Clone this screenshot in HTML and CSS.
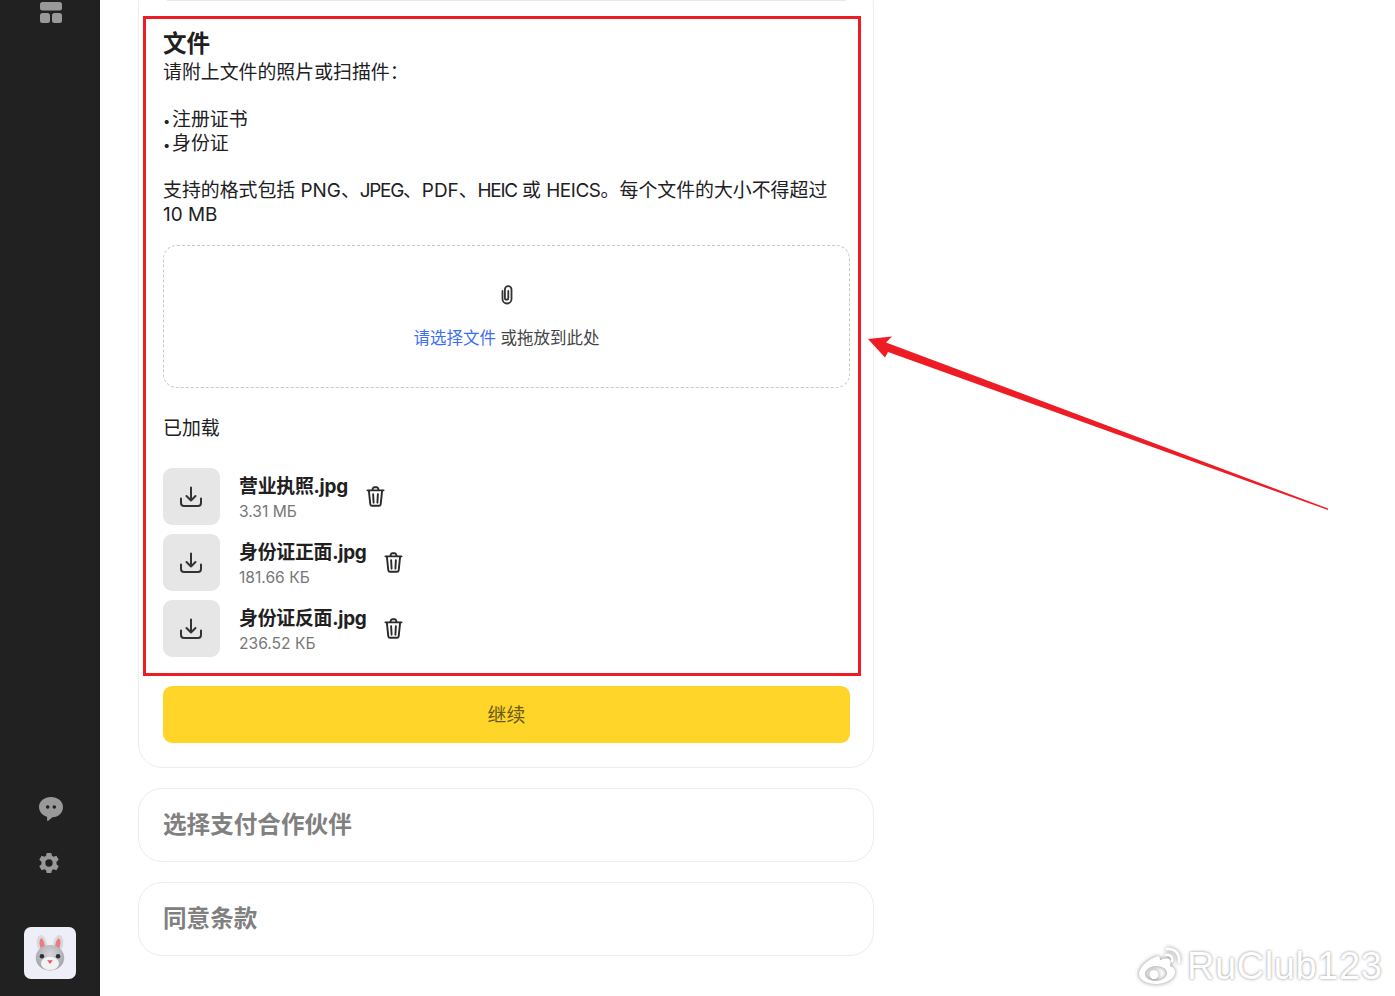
FILE: index.html
```html
<!DOCTYPE html>
<html lang="zh-CN">
<head>
<meta charset="utf-8">
<title>文件</title>
<link rel="stylesheet" href="styles.css">
</head>
<body>
<div class="app">
  <aside class="sidebar">
    <svg class="side-top" viewBox="0 0 24 24" width="24" height="24"><rect x="1" y="2" width="22" height="8.5" rx="2.500"/><rect x="1" y="13" width="10" height="10" rx="2.500"/><rect x="13" y="13" width="10" height="10" rx="2.500"/></svg>
    <div class="side-bottom">
      <svg class="side-chat" viewBox="0 0 24 24" width="24" height="24"><path d="M12 0C5.400 0 0 4.300 0 9.900c0 4.800 3.600 8.400 7.400 9.600.5.200.7.500.7 1v2.700c0 .6.6.9 1.100.5l4.300-3.500C19.500 20.200 24 15.600 24 9.900 24 4.300 18.600 0 12 0z"/><circle cx="8.700" cy="10" r="1.800" class="hole"/><circle cx="15.300" cy="10" r="1.800" class="hole"/></svg>
      <svg class="side-gear" viewBox="0 0 24 24" width="22" height="22"><path fill-rule="evenodd" d="M9.500 1h5l.7 3.200 1.800 1 3.100-1 2.500 4.300-2.400 2.200v2.600l2.400 2.200-2.500 4.300-3.100-1-1.800 1-.7 3.200h-5l-.7-3.200-1.800-1-3.100 1L1.400 15.500l2.400-2.200v-2.600L1.400 8.500l2.500-4.300 3.100 1 1.800-1zM12 8a4 4 0 1 0 0 8 4 4 0 0 0 0-8z"/></svg>
      <div class="avatar">
        <svg viewBox="0 0 40 40" width="38" height="38">
          <defs>
            <radialGradient id="fur" cx="50%" cy="35%" r="70%"><stop offset="0" stop-color="#d6d6da"/><stop offset="1" stop-color="#9c9ca4"/></radialGradient>
          </defs>
          <ellipse cx="11.500" cy="11" rx="5.300" ry="10" fill="#d9d9dd" transform="rotate(-10 11.500 11)"/>
          <ellipse cx="28.500" cy="11" rx="5.300" ry="10" fill="#d9d9dd" transform="rotate(10 28.500 11)"/>
          <ellipse cx="11.800" cy="11.500" rx="2.600" ry="7" fill="#ee7a82" transform="rotate(-10 11.800 11.500)"/>
          <ellipse cx="28.200" cy="11.500" rx="2.600" ry="7" fill="#ee7a82" transform="rotate(10 28.200 11.500)"/>
          <ellipse cx="20" cy="25" rx="15" ry="13.500" fill="url(#fur)"/>
          <ellipse cx="20" cy="31" rx="9.500" ry="7" fill="#f2f2f4"/>
          <circle cx="11.500" cy="23.500" r="2.400" fill="#2f2f33"/>
          <circle cx="28.500" cy="23.500" r="2.400" fill="#2f2f33"/>
          <path d="M17 27.500h6L20 31.500z" fill="#f0566a"/>
        </svg>
      </div>
    </div>
  </aside>
  <main class="main">
    <section class="card card-open">
      <div class="rule"></div>
      <h2 class="title">文件</h2>
      <p class="desc">请附上文件的照片或扫描件：<br><br><span class="dot">•</span>注册证书<br><span class="dot">•</span>身份证<br><br>支持的格式包括 PNG、<span class="tight">JPEG</span>、PDF、<span class="tight">HEIC</span> 或 <span class="tight-s">HEICS</span>。每个文件的大小不得超过<br>10 MB</p>
      <div class="drop">
        <svg class="clip" viewBox="0 0 14 20" width="14" height="20"><path d="M2.500 6v8a4.500 4.500 0 0 0 9 0V4.500a3.300 3.300 0 0 0-6.600 0V13a1.700 1.700 0 0 0 3.400 0V6"/></svg>
        <p class="drop-text"><span class="link">请选择文件</span> 或拖放到此处</p>
      </div>
      <p class="loaded">已加载</p>
      <ul class="files">
        <li class="file">
          <span class="tile"><svg viewBox="0 0 24 24" width="24" height="24"><path d="M12 2.500v13M7.500 11l4.500 4.500 4.500-4.500M2 13.500v4.500a3 3 0 0 0 3 3h14a3 3 0 0 0 3-3v-4.500"/></svg></span>
          <span class="meta"><b class="name">营业执照.jpg</b><span class="size">3.31 МБ</span></span>
          <svg class="trash" viewBox="0 0 20 22" width="19" height="21"><path d="M6.500 4.500l.8-2.200a1.500 1.500 0 0 1 1.400-1h2.600a1.500 1.500 0 0 1 1.400 1l.8 2.200M1.500 4.500h17M3 4.500l1.500 14.500a2 2 0 0 0 2 1.800h7a2 2 0 0 0 2-1.800L17 4.500M7.500 8.500l.5 9M12.500 8.500l-.5 9"/></svg>
        </li>
        <li class="file">
          <span class="tile"><svg viewBox="0 0 24 24" width="24" height="24"><path d="M12 2.500v13M7.500 11l4.500 4.500 4.500-4.500M2 13.500v4.500a3 3 0 0 0 3 3h14a3 3 0 0 0 3-3v-4.500"/></svg></span>
          <span class="meta"><b class="name">身份证正面.jpg</b><span class="size">181.66 КБ</span></span>
          <svg class="trash" viewBox="0 0 20 22" width="19" height="21"><path d="M6.500 4.500l.8-2.200a1.500 1.500 0 0 1 1.400-1h2.600a1.500 1.500 0 0 1 1.400 1l.8 2.200M1.500 4.500h17M3 4.500l1.500 14.500a2 2 0 0 0 2 1.800h7a2 2 0 0 0 2-1.800L17 4.500M7.500 8.500l.5 9M12.500 8.500l-.5 9"/></svg>
        </li>
        <li class="file">
          <span class="tile"><svg viewBox="0 0 24 24" width="24" height="24"><path d="M12 2.500v13M7.500 11l4.500 4.500 4.500-4.500M2 13.500v4.500a3 3 0 0 0 3 3h14a3 3 0 0 0 3-3v-4.500"/></svg></span>
          <span class="meta"><b class="name">身份证反面.jpg</b><span class="size">236.52 КБ</span></span>
          <svg class="trash" viewBox="0 0 20 22" width="19" height="21"><path d="M6.500 4.500l.8-2.200a1.500 1.500 0 0 1 1.400-1h2.600a1.500 1.500 0 0 1 1.400 1l.8 2.200M1.500 4.500h17M3 4.500l1.500 14.500a2 2 0 0 0 2 1.800h7a2 2 0 0 0 2-1.800L17 4.500M7.500 8.500l.5 9M12.500 8.500l-.5 9"/></svg>
        </li>
      </ul>
      <button class="continue" type="button">继续</button>
    </section>
    <section class="card card-closed"><h2 class="closed-title">选择支付合作伙伴</h2></section>
    <section class="card card-closed"><h2 class="closed-title">同意条款</h2></section>
  </main>
</div>
<div class="redbox"></div>
<svg class="arrow" viewBox="0 0 1395 996" width="1395" height="996"><path d="M868 339L892 336.500L886 342.500L1328 508.500L1328 510L888 352L885 357.500Z"/></svg>
<div class="mark">
  <svg viewBox="0 0 44 38" width="44" height="38"><path fill-rule="evenodd" d="M18 10C9 14 2 21 2 27c0 6 8 10 17 10 11 0 19-6 19-12 0-4-3-5-5-6 1-3 1-6-1-7-3-1-6 0-9 1 0-3-1-5-5-3zM19 19c6 0 11 3 11 7s-5 8-11 8-11-3-11-7 5-8 11-8zM17 23a4.500 4.500 0 1 0 .01 0z"/><path class="waves" d="M29 8c4-1 7 2 6 6M30 2c8-1 13 5 12 13"/></svg>
  <span class="mark-text">RuClub123</span>
</div>
</body>
</html>
```
FILE: styles.css
```css
* { box-sizing: border-box; }
html, body { margin: 0; height: 996px; overflow: hidden; background: #fff; }
body { font-family: Inter, "Noto Sans CJK SC", sans-serif; color: #21201f; position: relative; }
.app { display: flex; height: 996px; overflow: hidden; }

.sidebar { width: 100px; flex: none; background: #212121; display: flex; flex-direction: column; justify-content: space-between; align-items: center; padding-bottom: 17px; }
.sidebar svg { fill: #999; }
.side-top { margin-left: 2px; }
.side-bottom { display: flex; flex-direction: column; align-items: center; }
.side-chat { margin-left: 2px; }
.side-chat .hole { fill: #212121; }
.side-gear { margin-top: 31px; margin-right: 3px; }
.avatar { width: 52px; height: 52px; margin-top: 53px; background: #eeeef8; border-radius: 7px; display: flex; align-items: center; justify-content: center; }

.main { width: 736px; margin-left: 38px; margin-top: -20px; display: flex; flex-direction: column; gap: 19.500px; }
.card { border: 1px solid #ededed; border-radius: 24px; background: #fff; padding: 0 23px 0 24px; }
.card-open { padding-bottom: 24px; }
.rule { height: 1px; margin: 19px 4px 0; background: #e9e9e9; }
.title { margin: 28px 0 0; font-size: 23.600px; line-height: 29px; font-weight: 700; }
.desc { margin: 3px 0 0; font-size: 18.900px; line-height: 23.600px; }
.dot { display: inline-block; width: 9px; font-size: 13px; line-height: 1; }
.tight { letter-spacing: -1.300px; }
.tight-s { letter-spacing: -.4px; }

.drop { margin-top: 19px; height: 143px; border: 1px dashed #c8c8c8; border-radius: 14px; display: flex; flex-direction: column; align-items: center; padding-top: 39px; }
.clip { fill: none; stroke: #333; stroke-width: 1.800; stroke-linecap: round; }
.drop-text { margin: 21px 0 0; font-size: 16.500px; line-height: 24px; color: #444; }
.link { color: #3e6ff2; }

.loaded { margin: 29px 0 0; font-size: 18.900px; line-height: 24px; }
.files { list-style: none; margin: 27px 0 0; padding: 0; display: flex; flex-direction: column; gap: 9px; }
.file { display: flex; align-items: center; height: 57px; }
.tile { width: 57px; height: 57px; padding-right: 1px; background: #e6e6e6; border-radius: 9px; display: flex; align-items: center; justify-content: center; }
.tile svg { fill: none; stroke: #333; stroke-width: 2; stroke-linecap: round; stroke-linejoin: round; }
.meta { display: flex; flex-direction: column; margin-left: 19px; padding-top: 5px; }
.name { font-size: 18.900px; line-height: 24px; font-weight: 700; letter-spacing: -.25px; }
.size { font-size: 15.600px; line-height: 24px; color: #777; margin-top: 1px; }
.trash { margin-left: 18px; fill: none; stroke: #2a2a2a; stroke-width: 2; stroke-linecap: round; stroke-linejoin: round; }

.continue { display: block; width: 100%; height: 57px; margin-top: 29px; padding: 0 0 2px; border: 0; border-radius: 9px; background: #ffd52a; color: #6a5a14; font: inherit; font-size: 18.900px; }

.card-closed { height: 74.500px; display: flex; align-items: center; padding-bottom: 4px; }
.closed-title { margin: 0; font-size: 23.600px; font-weight: 700; color: #808080; }

.redbox { position: absolute; left: 143px; top: 16px; width: 718px; height: 660px; border: 3px solid #ee1c25; pointer-events: none; }
.arrow { position: absolute; left: 0; top: 0; fill: #ee1c25; pointer-events: none; }
.mark { position: absolute; left: 1137px; top: 944px; display: flex; align-items: center; gap: 6px; }
.mark svg { fill: #fff; filter: drop-shadow(0 0 2px #8a8a8a); }
.mark .waves { fill: none; stroke: #fff; stroke-width: 2.500; stroke-linecap: round; }
.mark-text { font-family: "Liberation Sans", sans-serif; font-size: 38px; line-height: 44px; color: #fff; text-shadow: 0 0 3px #8a8a8a; letter-spacing: .6px; }
```
